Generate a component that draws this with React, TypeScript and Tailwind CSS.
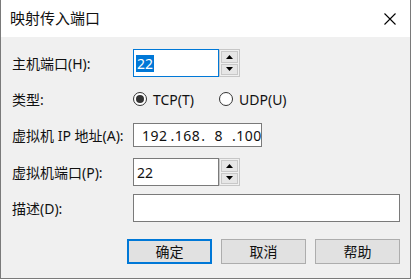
import React from 'react'

const font = { fontFamily: '"Segoe UI", "Noto Sans", "Noto Sans CJK SC", sans-serif' }

const Spin = ({ value, focused }: { value: string; focused?: boolean }) => (
  <div className="flex h-[28px]">
    <div className={`w-[86px] h-full bg-white border flex items-center pl-[2px] ${focused ? 'border-[#0078d7]' : 'border-[#7a7a7a]'}`}>
      {focused ? (
        <span className="bg-[#0078d7] text-white leading-[17px] px-px">{value}</span>
      ) : (
        <span className="leading-[17px] px-px">{value}</span>
      )}
    </div>
    <div className="w-[21px] h-full border border-[#c6c6c6] flex flex-col p-px gap-px bg-[#f0f0f0]">
      <div className="flex-1 bg-[#e6e6e6] border border-[#c8c8c8] flex items-center justify-center">
        <svg width="7" height="4" viewBox="0 0 7 4"><path d="M0 4 L3.5 0 L7 4 Z" fill="#000" /></svg>
      </div>
      <div className="flex-1 bg-[#e6e6e6] border border-[#c8c8c8] flex items-center justify-center">
        <svg width="7" height="4" viewBox="0 0 7 4"><path d="M0 0 L3.5 4 L7 0 Z" fill="#000" /></svg>
      </div>
    </div>
  </div>
)

const Radio = ({ label, checked }: { label: string; checked?: boolean }) => (
  <div className="flex items-center gap-[6px]">
    <div className="w-[14px] h-[14px] rounded-full border border-[#333] bg-white flex items-center justify-center">
      {checked && <div className="w-[8px] h-[8px] rounded-full bg-[#333]" />}
    </div>
    <span>{label}</span>
  </div>
)

const Row = ({ label, children, className }: { label: string; children: React.ReactNode; className: string }) => (
  <div className={`flex items-center ${className}`}>
    <div className="w-[121px]">{label}</div>
    {children}
  </div>
)

const Button = ({ label, primary }: { label: string; primary?: boolean }) => (
  <button className={`w-[85px] h-[25px] bg-[#e1e1e1] flex items-center justify-center ${primary ? 'border-2 border-[#0078d7]' : 'border border-[#adadad]'}`}>
    {label}
  </button>
)

export default function App() {
  return (
    <div className="w-[411px] h-[279px] bg-[#f0f0f0] border-x border-b border-[#7a7a7a] flex flex-col text-[14px] text-[#111]" style={font}>
      <div className="h-[37px] bg-white flex items-center justify-between pl-[9px] pr-[14px]">
        <span className="text-[15px]">映射传入端口</span>
        <svg width="12" height="12" viewBox="0 0 12 12"><path d="M0.5 0.5 L11.5 11.5 M11.5 0.5 L0.5 11.5" stroke="#000" strokeWidth="1.1" /></svg>
      </div>
      <div className="flex flex-col pl-[11px] pt-[12px]">
        <Row label="主机端口(H):" className="h-[28px]">
          <Spin value="22" focused />
        </Row>
        <Row label="类型:" className="h-[28px] mt-[8px]">
          <div className="flex items-center gap-[25px]">
            <Radio label="TCP(T)" checked />
            <Radio label="UDP(U)" />
          </div>
        </Row>
        <Row label="虚拟机 IP 地址(A):" className="h-[24px] mt-[10px]">
          <div className="w-[129px] h-full bg-white border border-[#7a7a7a] flex items-center pl-[8px] tracking-[0.5px]">
            <span>192</span><span className="ml-[3px]">.168</span><span className="ml-[1px]">.</span><span className="ml-[9px]">8</span><span className="ml-[9px]">.100</span>
          </div>
        </Row>
        <Row label="虚拟机端口(P):" className="h-[28px] mt-[11px]">
          <Spin value="22" />
        </Row>
        <Row label="描述(D):" className="h-[28px] mt-[8px]">
          <div className="w-[267px] h-full bg-white border border-[#7a7a7a]" />
        </Row>
      </div>
      <div className="flex justify-end gap-[9px] pr-[10px] mt-[17px]">
        <Button label="确定" primary />
        <Button label="取消" />
        <Button label="帮助" />
      </div>
    </div>
  )
}
